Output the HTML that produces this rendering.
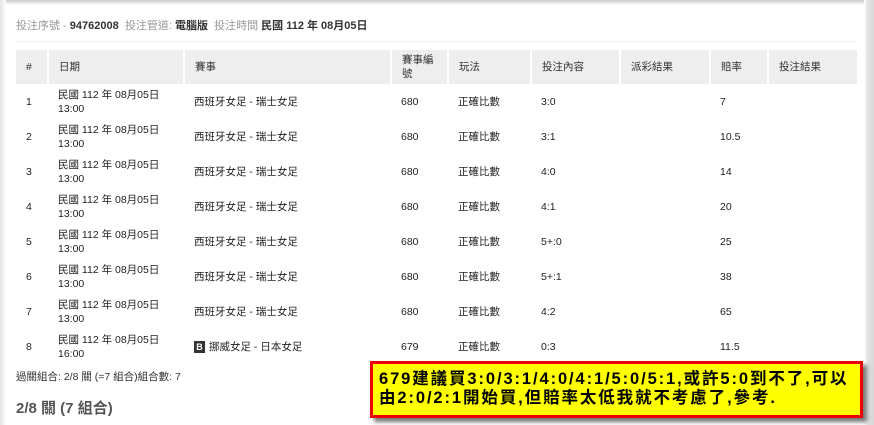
<!DOCTYPE html><html><head><meta charset="utf-8"><style>
body{margin:0;width:874px;height:425px;overflow:hidden;background:#fff;font-family:"Liberation Sans","Noto Sans CJK TC",sans-serif;color:#333;position:relative}
.top{position:absolute;left:0;top:0;width:874px;height:5px;background:linear-gradient(#ccc,#fff)}
.left{position:absolute;left:0;top:0;width:6px;height:425px;background:linear-gradient(90deg,#e4e4e4,#fff)}
.right{position:absolute;right:0;top:0;width:10px;height:425px;background:linear-gradient(90deg,#fff,#e0e0e0 40%,#d8d8d8)}
.hdr{position:absolute;left:16px;top:17px;font-size:11px;color:#999}
.hdr b{color:#333}
.line{position:absolute;left:16px;top:41px;width:840px;height:1px;background:#eee}
table{position:absolute;left:16px;top:50px;border-collapse:collapse;font-size:10.5px;width:841px;table-layout:fixed;color:#222}
th{background:#eee;font-weight:normal;text-align:left;height:34px;padding:0 10px;border-right:2px solid #fff;color:#333;line-height:14px;box-sizing:border-box}
td{height:35px;padding:0 10px;line-height:14px;vertical-align:middle}
.bx{display:inline-block;width:11px;height:12px;background:#333;color:#fff;font-size:9px;font-weight:bold;text-align:center;line-height:12px;margin-right:4px}
.f1{position:absolute;left:16px;top:369px;font-size:10.5px}
.f2{position:absolute;left:16px;top:397px;font-size:15px;font-weight:bold;color:#555}
.note{position:absolute;left:370px;top:361px;background:#ff0;border:3px solid #e00;box-shadow:4px 4px 4px #777;font-size:16.5px;font-weight:bold;color:#000;line-height:19px;padding:6px 0 0 6px;box-sizing:border-box;width:493px;height:57px;letter-spacing:1.9px;white-space:nowrap}
</style></head><body>
<div class="top"></div><div class="left"></div><div class="right"></div>
<div class="hdr">投注序號 - <b>94762008</b> &nbsp;投注管道: <b>電腦版</b> &nbsp;投注時間 <b>民國 112 年 08月05日</b></div>
<div class="line"></div>
<table>
<colgroup><col style="width:32px"><col style="width:136px"><col style="width:207px"><col style="width:57px"><col style="width:83px"><col style="width:89px"><col style="width:90px"><col style="width:58px"><col style="width:89px"></colgroup>
<tr><th>#</th><th>日期</th><th>賽事</th><th>賽事編號</th><th>玩法</th><th>投注內容</th><th>派彩結果</th><th>賠率</th><th style="border-right:0">投注結果</th></tr>
<tr><td>1</td><td>民國 112 年 08月05日<br>13:00</td><td>西班牙女足 - 瑞士女足</td><td>680</td><td>正確比數</td><td>3:0</td><td></td><td>7</td><td></td></tr>
<tr><td>2</td><td>民國 112 年 08月05日<br>13:00</td><td>西班牙女足 - 瑞士女足</td><td>680</td><td>正確比數</td><td>3:1</td><td></td><td>10.5</td><td></td></tr>
<tr><td>3</td><td>民國 112 年 08月05日<br>13:00</td><td>西班牙女足 - 瑞士女足</td><td>680</td><td>正確比數</td><td>4:0</td><td></td><td>14</td><td></td></tr>
<tr><td>4</td><td>民國 112 年 08月05日<br>13:00</td><td>西班牙女足 - 瑞士女足</td><td>680</td><td>正確比數</td><td>4:1</td><td></td><td>20</td><td></td></tr>
<tr><td>5</td><td>民國 112 年 08月05日<br>13:00</td><td>西班牙女足 - 瑞士女足</td><td>680</td><td>正確比數</td><td>5+:0</td><td></td><td>25</td><td></td></tr>
<tr><td>6</td><td>民國 112 年 08月05日<br>13:00</td><td>西班牙女足 - 瑞士女足</td><td>680</td><td>正確比數</td><td>5+:1</td><td></td><td>38</td><td></td></tr>
<tr><td>7</td><td>民國 112 年 08月05日<br>13:00</td><td>西班牙女足 - 瑞士女足</td><td>680</td><td>正確比數</td><td>4:2</td><td></td><td>65</td><td></td></tr>
<tr><td>8</td><td>民國 112 年 08月05日<br>16:00</td><td><span class="bx">B</span>挪威女足 - 日本女足</td><td>679</td><td>正確比數</td><td>0:3</td><td></td><td>11.5</td><td></td></tr>
</table>
<div class="f1">過關組合: 2/8 關 (=7 組合)組合數: 7</div>
<div class="f2">2/8 關 (7 組合)</div>
<div class="note">679建議買3:0/3:1/4:0/4:1/5:0/5:1,或許5:0到不了,可以<br>由2:0/2:1開始買,但賠率太低我就不考慮了,參考.</div>
</body></html>
